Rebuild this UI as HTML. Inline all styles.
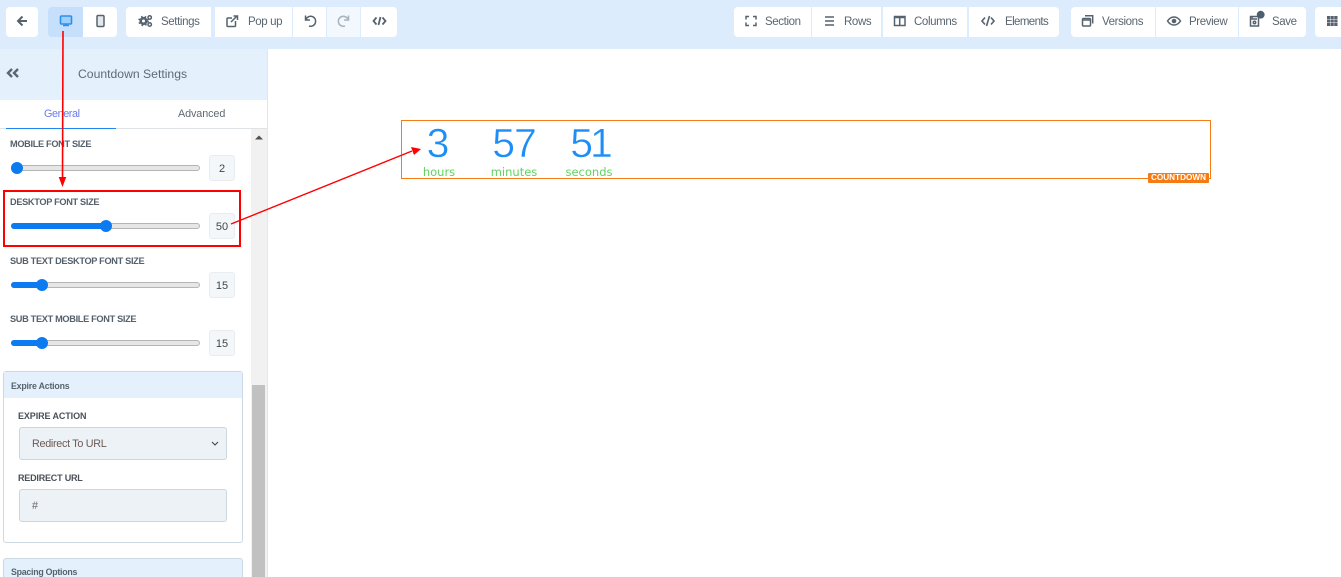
<!DOCTYPE html>
<html><head><meta charset="utf-8">
<style>
html,body{margin:0;padding:0;width:1341px;height:577px;overflow:hidden;background:#fff;font-family:"Liberation Sans",sans-serif;color:#5a6570}
#w{position:relative;width:1341px;height:577px;overflow:hidden}
.a{position:absolute;white-space:nowrap}
.b{position:absolute;top:7px;height:30px;background:#fff}
.t{position:absolute;top:15px;font-size:11.5px;letter-spacing:-.38px;line-height:15px;color:#5a6570;white-space:nowrap}
.l{position:absolute;left:10px;font-size:9.2px;letter-spacing:-.32px;font-weight:bold;line-height:12px;color:#55606b;white-space:nowrap}
.tr{position:absolute;left:11px;width:189px;height:6px;background:#e6e6e6;border:1px solid #b5b5b5;border-radius:4px;box-sizing:border-box}
.fi{position:absolute;left:11px;height:6px;background:#0d7bf0;border-radius:4px 0 0 4px}
.th{position:absolute;width:12px;height:12px;border-radius:50%;background:#0d7bf0}
.v{position:absolute;left:209px;width:26px;height:26px;background:#f3f7fa;border:1px solid #e8edf1;border-radius:3px;box-sizing:border-box;text-align:center;font-size:11px;line-height:26px;color:#444}
svg{position:absolute}
.i{fill:none;stroke:#56626e;stroke-width:1.5}
.n{position:absolute;top:121px;width:60px;text-align:center;font-size:41px;line-height:44px;color:#1c8ef5;-webkit-text-stroke:.5px #fff}
.s{position:absolute;top:165px;width:60px;text-align:center;font-family:'DejaVu Sans',sans-serif;font-size:11.5px;line-height:14px;color:#5fd35f}
</style></head><body><div id="w">
<div class="a" style="left:0;top:0;width:1341px;height:49px;background:#dcecfd"></div>

<div class="b" style="left:6px;width:32px;border-radius:4px"></div>
<div class="b" style="left:48px;width:35px;background:#c6e0fb;border-radius:4px 0 0 4px"></div>
<div class="b" style="left:83px;width:34px;border-radius:0 4px 4px 0"></div>
<div class="b" style="left:126px;width:85px;border-radius:4px 0 0 4px"></div>
<div class="b" style="left:215px;width:77px"></div>
<div class="b" style="left:293px;width:33px"></div>
<div class="b" style="left:327px;width:33px;background:#f3f8fe"></div>
<div class="b" style="left:361px;width:36px;border-radius:0 4px 4px 0"></div>
<div class="b" style="left:734px;width:77px;border-radius:4px 0 0 4px"></div>
<div class="b" style="left:812px;width:69px"></div>
<div class="b" style="left:883px;width:84px"></div>
<div class="b" style="left:969px;width:90px;border-radius:0 4px 4px 0"></div>
<div class="b" style="left:1071px;width:84px;border-radius:4px 0 0 4px"></div>
<div class="b" style="left:1156px;width:82px"></div>
<div class="b" style="left:1239px;width:67px;border-radius:0 4px 4px 0"></div>
<div class="b" style="left:1315px;width:26px;border-radius:4px 0 0 4px"></div>

<svg style="left:0;top:0" width="1341" height="49">
<path d="M27 21H18.5M22.5 16.5L18 21L22.5 25.5" fill="none" stroke="#56626e" stroke-width="2"/>
<rect x="60.5" y="16" width="11" height="8" rx="1" fill="#9fd0fb" stroke="#2a8ff0" stroke-width="1.6"/><path d="M63 25.5H69M66 24V26" stroke="#2a8ff0" stroke-width="1.5"/>
<rect x="97" y="15.5" width="7" height="11" rx="1.2" fill="#e4e8ec" stroke="#56626e" stroke-width="1.5"/>
<circle cx="143.5" cy="21" r="2.8" fill="none" stroke="#56626e" stroke-width="2.6"/><circle cx="143.5" cy="21" r="4.6" fill="none" stroke="#56626e" stroke-width="1.4" stroke-dasharray="1.6 2.2"/><circle cx="149.7" cy="17.5" r="1.7" class="i" stroke-width="1.3"/><circle cx="149.7" cy="24.5" r="1.7" class="i" stroke-width="1.3"/>
<path d="M235.5 21V25.5Q235.5 26.5 234.5 26.5H228Q227 26.5 227 25.5V19Q227 18 228 18H232" class="i"/><path d="M231 22L237 16M233.5 16H237.5V20" class="i"/>
<path d="M305.5 15.5V20H310M306 19.5A5 5 0 1 1 309 26" class="i" stroke-width="1.6"/>
<path d="M348.5 15.5V20H344M348 19.5A5 5 0 1 0 345 26" fill="none" stroke="#a9b4be" stroke-width="1.6"/>
<path d="M376.5 17.5L373.5 21L376.5 24.5M382.5 17.5L385.5 21L382.5 24.5M380.5 17L378.5 25" fill="none" stroke="#56626e" stroke-width="1.8"/>
<path d="M746 19.5V16.5H749M753 16.5H756V19.5M756 22.5V25.5H753M749 25.5H746V22.5" class="i" stroke-width="1.4"/>
<path d="M825 17H834M825 21H834M825 25H834" class="i" stroke-width="1.3"/>
<rect x="894.5" y="16.5" width="10.5" height="9" class="i" stroke-width="1.2"/><path d="M894.5 17.5H905" class="i" stroke-width="2"/><path d="M899.7 18V25" class="i" stroke-width="1.1"/>
<path d="M985 17.5L982 21L985 24.5M991 17.5L994 21L991 24.5M989.5 16L986.5 26" fill="none" stroke="#56626e" stroke-width="1.6"/>
<rect x="1082.5" y="18.5" width="8" height="7.5" rx="1" class="i" stroke-width="1.3"/><path d="M1082.5 20H1090.5" class="i" stroke-width="2.4"/><path d="M1085 15.7H1092.7V23.5" class="i" stroke-width="1.2"/>
<path d="M1167.5 21C1169.5 18 1172 17 1174 17S1178.5 18 1180.5 21C1178.5 24 1176 25 1174 25S1169.5 24 1167.5 21Z" class="i" stroke-width="1.1"/><circle cx="1174" cy="21" r="2.3" fill="#56626e"/>
<rect x="1250.5" y="16.5" width="8" height="9.5" class="i" stroke-width="1.2"/><circle cx="1254.5" cy="22.5" r="1.2" class="i" stroke-width="1"/><path d="M1252 17V19H1257" class="i" stroke-width="1"/><circle cx="1260.7" cy="14.7" r="3.9" fill="#4d5f70"/>
<path d="M1327 16H1337.5V26H1327Z" fill="#56626e"/><path d="M1327 19.3H1337.5M1327 22.7H1337.5M1330.5 16V26M1334 16V26" stroke="#fff" stroke-width=".45"/>
</svg>

<div class="t" style="left:161px">Settings</div>
<div class="t" style="left:248px">Pop up</div>
<div class="t" style="left:765px">Section</div>
<div class="t" style="left:844px">Rows</div>
<div class="t" style="left:914px">Columns</div>
<div class="t" style="left:1005px;letter-spacing:-.6px">Elements</div>
<div class="t" style="left:1102px">Versions</div>
<div class="t" style="left:1189px">Preview</div>
<div class="t" style="left:1272px">Save</div>

<!-- panel -->
<div class="a" style="left:0;top:49px;width:267px;height:51px;background:#e4f1fd"></div>
<div class="a" style="left:267px;top:49px;width:1px;height:528px;background:#e3e6e8"></div>
<svg style="left:0;top:60px" width="30" height="24"><path d="M12 9L8 13L12 17M18 9L14 13L18 17" fill="none" stroke="#5b6670" stroke-width="2.4"/></svg>
<div class="a" style="left:78px;top:67px;font-size:12.2px;line-height:15px;color:#5f6a74">Countdown Settings</div>
<div class="a" style="left:44px;top:107px;font-size:10.8px;letter-spacing:-.4px;line-height:14px;color:#6a7bea">General</div>
<div class="a" style="left:178px;top:107px;font-size:10.8px;letter-spacing:-.1px;line-height:14px;color:#5f6a74">Advanced</div>
<div class="a" style="left:0;top:128px;width:267px;height:1px;background:#dfe3e6"></div>
<div class="a" style="left:6px;top:128px;width:110px;height:1px;background:#1e88f0"></div>

<div class="a" style="left:251px;top:129px;width:16px;height:448px;background:#f1f1f1"></div>
<div class="a" style="left:252px;top:385px;width:13px;height:192px;background:#c1c1c1"></div>
<svg style="left:251px;top:129px" width="16" height="16"><path d="M4 10.5L8 6.5L12 10.5Z" fill="#505050"/></svg>

<div class="l" style="top:138px">MOBILE FONT SIZE</div>
<div class="tr" style="top:165px"></div><div class="th" style="left:11px;top:162px"></div><div class="v" style="top:155px">2</div>

<div class="l" style="top:196px">DESKTOP FONT SIZE</div>
<div class="tr" style="top:223px"></div><div class="fi" style="top:223px;width:94px"></div><div class="th" style="left:99.5px;top:220px"></div><div class="v" style="top:213px">50</div>

<div class="l" style="top:255px">SUB TEXT DESKTOP FONT SIZE</div>
<div class="tr" style="top:282px"></div><div class="fi" style="top:282px;width:30px"></div><div class="th" style="left:35.5px;top:279px"></div><div class="v" style="top:272px">15</div>

<div class="l" style="top:313px">SUB TEXT MOBILE FONT SIZE</div>
<div class="tr" style="top:340px"></div><div class="fi" style="top:340px;width:30px"></div><div class="th" style="left:35.5px;top:337px"></div><div class="v" style="top:330px">15</div>

<div class="a" style="left:3px;top:371px;width:240px;height:172px;border:1px solid #ccd9e3;border-radius:3px;box-sizing:border-box"></div>
<div class="a" style="left:4px;top:372px;width:238px;height:26px;background:#e4f1fd"></div>
<div class="a" style="left:11px;top:380px;font-size:8.8px;letter-spacing:-.2px;font-weight:bold;line-height:12px;color:#55646f">Expire Actions</div>
<div class="a" style="left:18px;top:410px;font-size:9px;letter-spacing:-.1px;font-weight:bold;line-height:12px;color:#4a5058">EXPIRE ACTION</div>
<div class="a" style="left:19px;top:427px;width:208px;height:33px;background:#edf2f6;border:1px solid #ccd6df;border-radius:3px;box-sizing:border-box"></div>
<div class="a" style="left:32px;top:437px;font-size:10.8px;letter-spacing:-.3px;line-height:14px;color:#6b5a55">Redirect To URL</div>
<svg style="left:210px;top:440px" width="10" height="8"><path d="M2 2L5 5L8 2" fill="none" stroke="#444" stroke-width="1.1"/></svg>
<div class="a" style="left:18px;top:472px;font-size:9px;letter-spacing:-.2px;font-weight:bold;line-height:12px;color:#4a5058">REDIRECT URL</div>
<div class="a" style="left:19px;top:489px;width:208px;height:33px;background:#edf2f6;border:1px solid #ccd6df;border-radius:3px;box-sizing:border-box"></div>
<div class="a" style="left:32px;top:499px;font-size:10.8px;line-height:14px;color:#666">#</div>

<div class="a" style="left:3px;top:558px;width:240px;height:30px;background:#e4f1fd;border:1px solid #ccd9e3;border-radius:3px;box-sizing:border-box"></div>
<div class="a" style="left:11px;top:566px;font-size:8.8px;letter-spacing:-.25px;font-weight:bold;line-height:12px;color:#55646f">Spacing Options</div>

<!-- countdown -->
<div class="a" style="left:401px;top:120px;width:810px;height:59px;border:1px solid #f57c14;box-sizing:border-box"></div>
<div class="a" style="left:1148px;top:173px;width:61px;height:10px;background:#f57c14;border-radius:1px;color:#fff;font-size:8.2px;font-weight:bold;line-height:10px;text-align:center">COUNTDOWN</div>
<div class="n" style="left:408px">3</div>
<div class="n" style="left:484px;letter-spacing:-1px">57</div>
<div class="n" style="left:560px;letter-spacing:-3px">51</div>
<div class="s" style="left:409px">hours</div>
<div class="s" style="left:484px">minutes</div>
<div class="s" style="left:559px">seconds</div>

<!-- annotations -->
<div class="a" style="left:3px;top:190px;width:238px;height:57px;border:2px solid #f00;box-sizing:border-box"></div>
<svg style="left:0;top:0" width="1341" height="577">
<path d="M63 31L62.5 180" stroke="#f00" stroke-width="1.6" fill="none"/>
<path d="M58.7 177H66.2L62.5 187Z" fill="#f00"/>
<path d="M231 224L412 151" stroke="#f00" stroke-width="1.4" fill="none"/>
<path d="M421 149L411 147L414 155Z" fill="#f00"/>
</svg>
</div></body></html>
